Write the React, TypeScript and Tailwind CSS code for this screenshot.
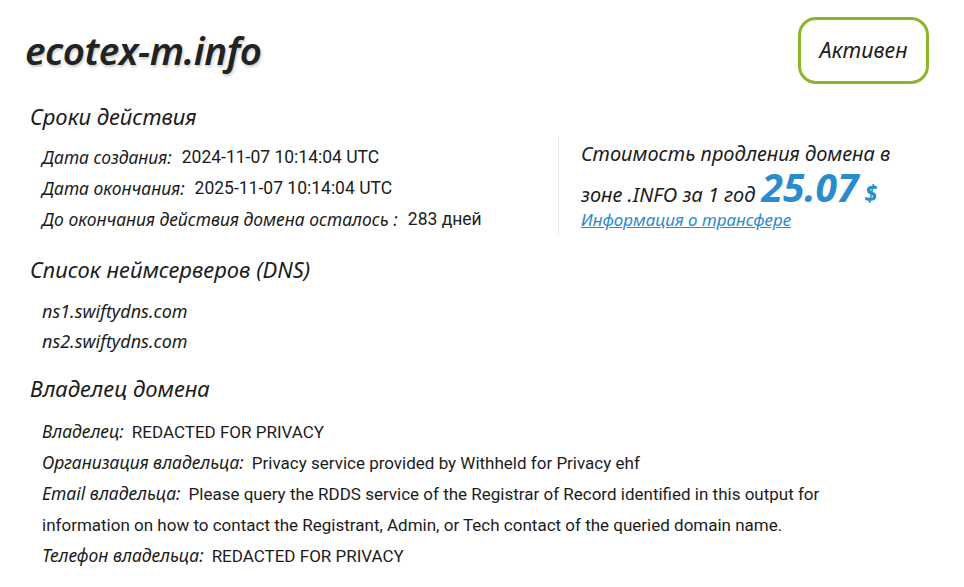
export default function App() {
  const dates = [
    { label: "Дата создания:", value: "2024-11-07 10:14:04 UTC" },
    { label: "Дата окончания:", value: "2025-11-07 10:14:04 UTC" },
    { label: "До окончания действия домена осталось :", value: "283 дней" },
  ];
  const owner = [
    { label: "Владелец:", value: "REDACTED FOR PRIVACY" },
    { label: "Организация владельца:", value: "Privacy service provided by Withheld for Privacy ehf" },
    {
      label: "Email владельца:",
      value:
        "Please query the RDDS service of the Registrar of Record identified in this output for information on how to contact the Registrant, Admin, or Tech contact of the queried domain name.",
    },
    { label: "Телефон владельца:", value: "REDACTED FOR PRIVACY" },
  ];

  return (
    <div className="w-[964px] h-[587px] overflow-hidden bg-white text-[#1c1c1c] font-['Roboto','Liberation_Sans',sans-serif]">
      <div className="pl-[25px] pr-[35px] pt-[17px]">
        {/* Header */}
        <div className="flex justify-between items-start">
          <h1 className="mt-[11px] text-[38.5px] leading-[44px] font-semibold italic tracking-[-0.5px] font-['Noto_Sans',sans-serif] text-[#222] [text-shadow:1px_2px_3px_rgba(0,0,0,0.22)]">
            ecotex-m.info
          </h1>
          <div className="w-[131px] h-[67px] border-[3px] border-[#8cb52b] rounded-[18px] flex items-center justify-center">
            <span className="italic text-[21.5px] font-['Noto_Sans',sans-serif]">Активен</span>
          </div>
        </div>

        <div className="flex mt-[18px]">
          <div className="w-[533px]">
            <h2 className="pl-[5px] italic text-[22px] leading-[28px] font-['Noto_Sans',sans-serif]">Сроки действия</h2>
            <div className="pl-[17px] mt-[12px] flex flex-col">
              {dates.map((d) => (
                <div key={d.label} className="h-[31px] flex items-center text-[17.5px]">
                  <span className="italic font-['Noto_Sans',sans-serif] text-[17.5px]">{d.label}</span>
                  <span className="ml-[10px]">{d.value}</span>
                </div>
              ))}
            </div>
          </div>
          <div className="mt-[35px] pl-[22px] border-l border-[#e8e8e8] h-[98px]">
            <div className="italic text-[20px] leading-[33px] font-['Noto_Sans',sans-serif]">
              <div>Стоимость продления домена в</div>
              <div className="flex items-baseline h-[33px]">
                <span>зоне .INFO за 1 год</span>
                <span className="ml-[6px] text-[39px] leading-[33px] font-bold text-[#2a8ccc]">25.07</span>
                <span className="ml-[6px] text-[23px] leading-[33px] font-bold text-[#2a8ccc]">$</span>
              </div>
            </div>
            <a href="#" className="block mt-[6px] italic text-[17px] leading-[22px] text-[#2a8ccc] underline font-['Noto_Sans',sans-serif]">
              Информация о трансфере
            </a>
          </div>
        </div>

        <h2 className="mt-[20px] pl-[5px] italic text-[22px] leading-[28px] font-['Noto_Sans',sans-serif]">
          Список неймсерверов (DNS)
        </h2>
        <div className="pl-[17px] mt-[13px] flex flex-col">
          {["ns1.swiftydns.com", "ns2.swiftydns.com"].map((ns) => (
            <div key={ns} className="h-[30px] flex items-center italic text-[18px] font-['Noto_Sans',sans-serif]">
              {ns}
            </div>
          ))}
        </div>

        <h2 className="mt-[18px] pl-[5px] italic text-[22px] leading-[28px] font-['Noto_Sans',sans-serif]">Владелец домена</h2>
        <div className="pl-[17px] mt-[14px] w-[870px]">
          {owner.map((o) => (
            <div key={o.label} className="text-[17px] leading-[30.2px]">
              <span className="italic font-['Noto_Sans',sans-serif] text-[17.5px]">{o.label}</span>
              <span className="ml-[8px]">{o.value}</span>
            </div>
          ))}
        </div>
      </div>
    </div>
  );
}
